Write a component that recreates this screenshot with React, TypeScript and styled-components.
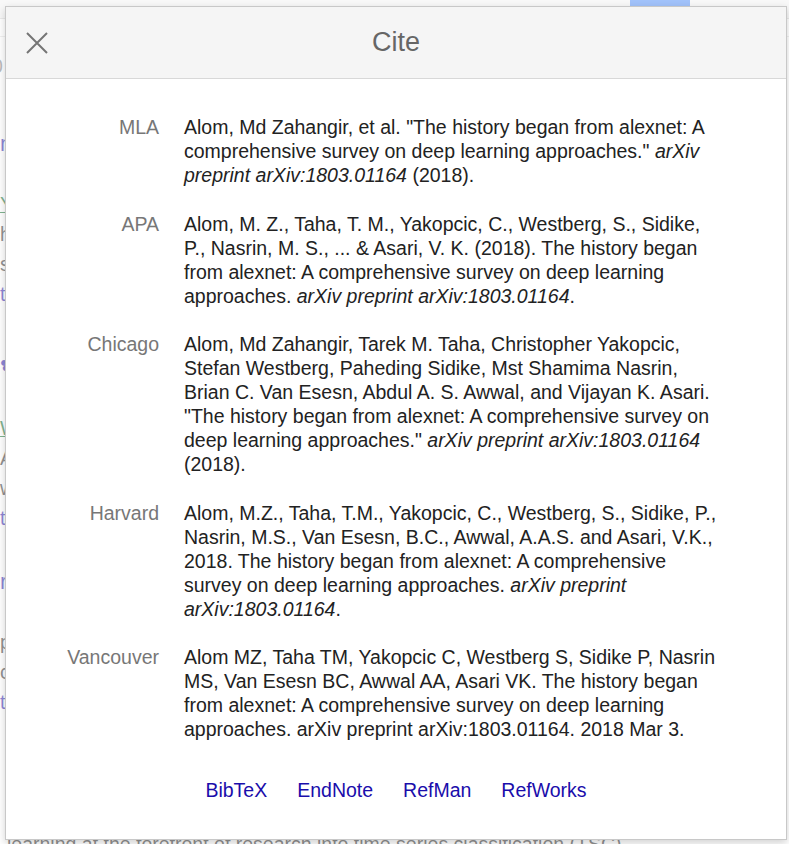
import React from 'react';
import styled, { createGlobalStyle } from 'styled-components';

const GlobalStyle = createGlobalStyle`
  html, body {
    margin: 0;
    padding: 0;
    background: #fff;
  }
  body {
    font-family: "Liberation Sans", Arial, sans-serif;
  }
`;

/* page behind the dialog */

const Page = styled.div`
  position: relative;
  width: 789px;
  height: 844px;
  overflow: hidden;
  background: #fff;
`;

const TopBar = styled.div`
  display: flex;
  height: 18px;
  background: #f1f1f1;
  border-bottom: 1px solid #d6d6d6;
`;

const SearchButton = styled.div`
  margin-left: 630px;
  width: 60px;
  height: 40px;
  background: #4285f4;
`;

const SubBar = styled.div`
  height: 17px;
  border-bottom: 1px solid #e0e0e0;
`;

const Results = styled.div`
  padding-top: 14px;
  font-size: 19.5px;
  line-height: 30px;
`;

const Count = styled.div`
  color: #777;
  margin-left: -8px;
  margin-bottom: 48px;
`;

const Result = styled.div`
  margin-bottom: 34px;
`;

const ResultTitle = styled.div`
  color: #1a0dab;
  font-size: 22px;
  margin-bottom: 30px;
`;

const ResultSource = styled.div`
  color: #006621;
  text-decoration: underline;
`;

const ResultSnippet = styled.div`
  color: #222;
`;

const ResultLinks = styled.div`
  color: #1a0dab;
`;

const BottomSnippet = styled.div`
  position: absolute;
  left: 7px;
  top: 835px;
  font-size: 19.5px;
  line-height: 1;
  color: #222;
  white-space: nowrap;
`;

const Veil = styled.div`
  position: absolute;
  inset: 0;
  background: rgba(255, 255, 255, 0.5);
`;

/* cite dialog */

const Dialog = styled.div`
  position: absolute;
  left: 5px;
  top: 6px;
  width: 782px;
  height: 834px;
  box-sizing: border-box;
  display: flex;
  flex-direction: column;
  background: #fff;
  border: 1px solid #c8c8c8;
  box-shadow: 0 3px 8px rgba(0, 0, 0, 0.18);
`;

const Header = styled.div`
  display: grid;
  grid-template-columns: 62px 1fr 62px;
  align-items: center;
  height: 72px;
  box-sizing: border-box;
  background: #f5f5f5;
  border-bottom: 1px solid #d8d8d8;
`;

const CloseButton = styled.button`
  display: flex;
  justify-content: center;
  align-items: center;
  padding: 0;
  border: 0;
  background: none;
  cursor: pointer;
`;

const Title = styled.h2`
  margin: 0;
  text-align: center;
  font-size: 27px;
  font-weight: normal;
  color: #666;
`;

const Body = styled.div`
  padding: 36px 0 37px;
`;

const CiteTable = styled.div`
  display: grid;
  grid-template-columns: 130px 540px;
  column-gap: 25px;
  row-gap: 24.5px;
  padding-left: 23px;
  font-size: 19.5px;
  line-height: 24px;
`;

const Label = styled.div`
  text-align: right;
  color: #777;
`;

const Citation = styled.div`
  color: #222;
`;

const Formats = styled.div`
  display: flex;
  justify-content: center;
  gap: 30px;
  margin-top: 37px;
  font-size: 19.5px;
  line-height: 24px;
`;

const FormatLink = styled.a`
  color: #1a0dab;
  text-decoration: none;
`;

const citations = [
  {
    style: 'MLA',
    text: (
      <>
        Alom, Md Zahangir, et al. "The history began from alexnet: A comprehensive survey on deep
        learning approaches." <i>arXiv preprint arXiv:1803.01164</i> (2018).
      </>
    ),
  },
  {
    style: 'APA',
    text: (
      <>
        Alom, M. Z., Taha, T. M., Yakopcic, C., Westberg, S., Sidike, P., Nasrin, M. S., ... &amp;
        Asari, V. K. (2018). The history began from alexnet: A comprehensive survey on deep learning
        approaches. <i>arXiv preprint arXiv:1803.01164</i>.
      </>
    ),
  },
  {
    style: 'Chicago',
    text: (
      <>
        Alom, Md Zahangir, Tarek M. Taha, Christopher Yakopcic, Stefan Westberg, Paheding Sidike,
        Mst Shamima Nasrin, Brian C. Van Esesn, Abdul A. S. Awwal, and Vijayan K. Asari. "The history
        began from alexnet: A comprehensive survey on deep learning approaches."{' '}
        <i>arXiv preprint arXiv:1803.01164</i> (2018).
      </>
    ),
  },
  {
    style: 'Harvard',
    text: (
      <>
        Alom, M.Z., Taha, T.M., Yakopcic, C., Westberg, S., Sidike, P., Nasrin, M.S., Van Esesn,
        B.C., Awwal, A.A.S. and Asari, V.K., 2018. The history began from alexnet: A comprehensive
        survey on deep learning approaches. <i>arXiv preprint arXiv:1803.01164</i>.
      </>
    ),
  },
  {
    style: 'Vancouver',
    text: (
      <>
        Alom MZ, Taha TM, Yakopcic C, Westberg S, Sidike P, Nasrin MS, Van Esesn BC, Awwal AA,
        Asari VK. The history began from alexnet: A comprehensive survey on deep learning
        approaches. arXiv preprint arXiv:1803.01164. 2018 Mar 3.
      </>
    ),
  },
];

const formats = ['BibTeX', 'EndNote', 'RefMan', 'RefWorks'];

function CloseIcon() {
  return (
    <svg width="22" height="22" viewBox="0 0 22 22">
      <path d="M1 1 L21 21 M21 1 L1 21" stroke="#757575" strokeWidth="2" fill="none" />
    </svg>
  );
}

function Background() {
  return (
    <>
      <TopBar>
        <SearchButton />
      </TopBar>
      <SubBar />
      <Results>
        <Count>0</Count>
        <Result>
          <ResultTitle>neural networks for time series</ResultTitle>
          <ResultSource>Y Zheng, Q Liu, E Chen - 2014</ResultSource>
          <ResultSnippet>he classification of time series</ResultSnippet>
          <ResultSnippet>s deep learning methods</ResultSnippet>
          <ResultLinks>to Cited by Related articles</ResultLinks>
          <ResultLinks style={{ marginTop: 40 }}>✿</ResultLinks>
        </Result>
        <Result>
          <ResultSource>W Wang, Z Yan, T Oates</ResultSource>
          <ResultSnippet>A strong baseline</ResultSnippet>
          <ResultSnippet>we propose a simple</ResultSnippet>
          <ResultLinks>to Cited by</ResultLinks>
        </Result>
        <Result>
          <ResultTitle>r deep learning for time series</ResultTitle>
          <ResultSnippet>p deep learning approaches</ResultSnippet>
          <ResultSnippet>c convolutional networks</ResultSnippet>
          <ResultLinks>to Cited by</ResultLinks>
        </Result>
      </Results>
      <BottomSnippet>
        learning at the forefront of research into time series classification (TSC)
      </BottomSnippet>
      <Veil />
    </>
  );
}

export default function App() {
  return (
    <Page>
      <GlobalStyle />
      <Background />
      <Dialog role="dialog" aria-label="Cite">
        <Header>
          <CloseButton aria-label="Close">
            <CloseIcon />
          </CloseButton>
          <Title>Cite</Title>
          <span />
        </Header>
        <Body>
          <CiteTable>
            {citations.map((c) => (
              <React.Fragment key={c.style}>
                <Label>{c.style}</Label>
                <Citation>{c.text}</Citation>
              </React.Fragment>
            ))}
          </CiteTable>
          <Formats>
            {formats.map((f) => (
              <FormatLink key={f} href="#">
                {f}
              </FormatLink>
            ))}
          </Formats>
        </Body>
      </Dialog>
    </Page>
  );
}
